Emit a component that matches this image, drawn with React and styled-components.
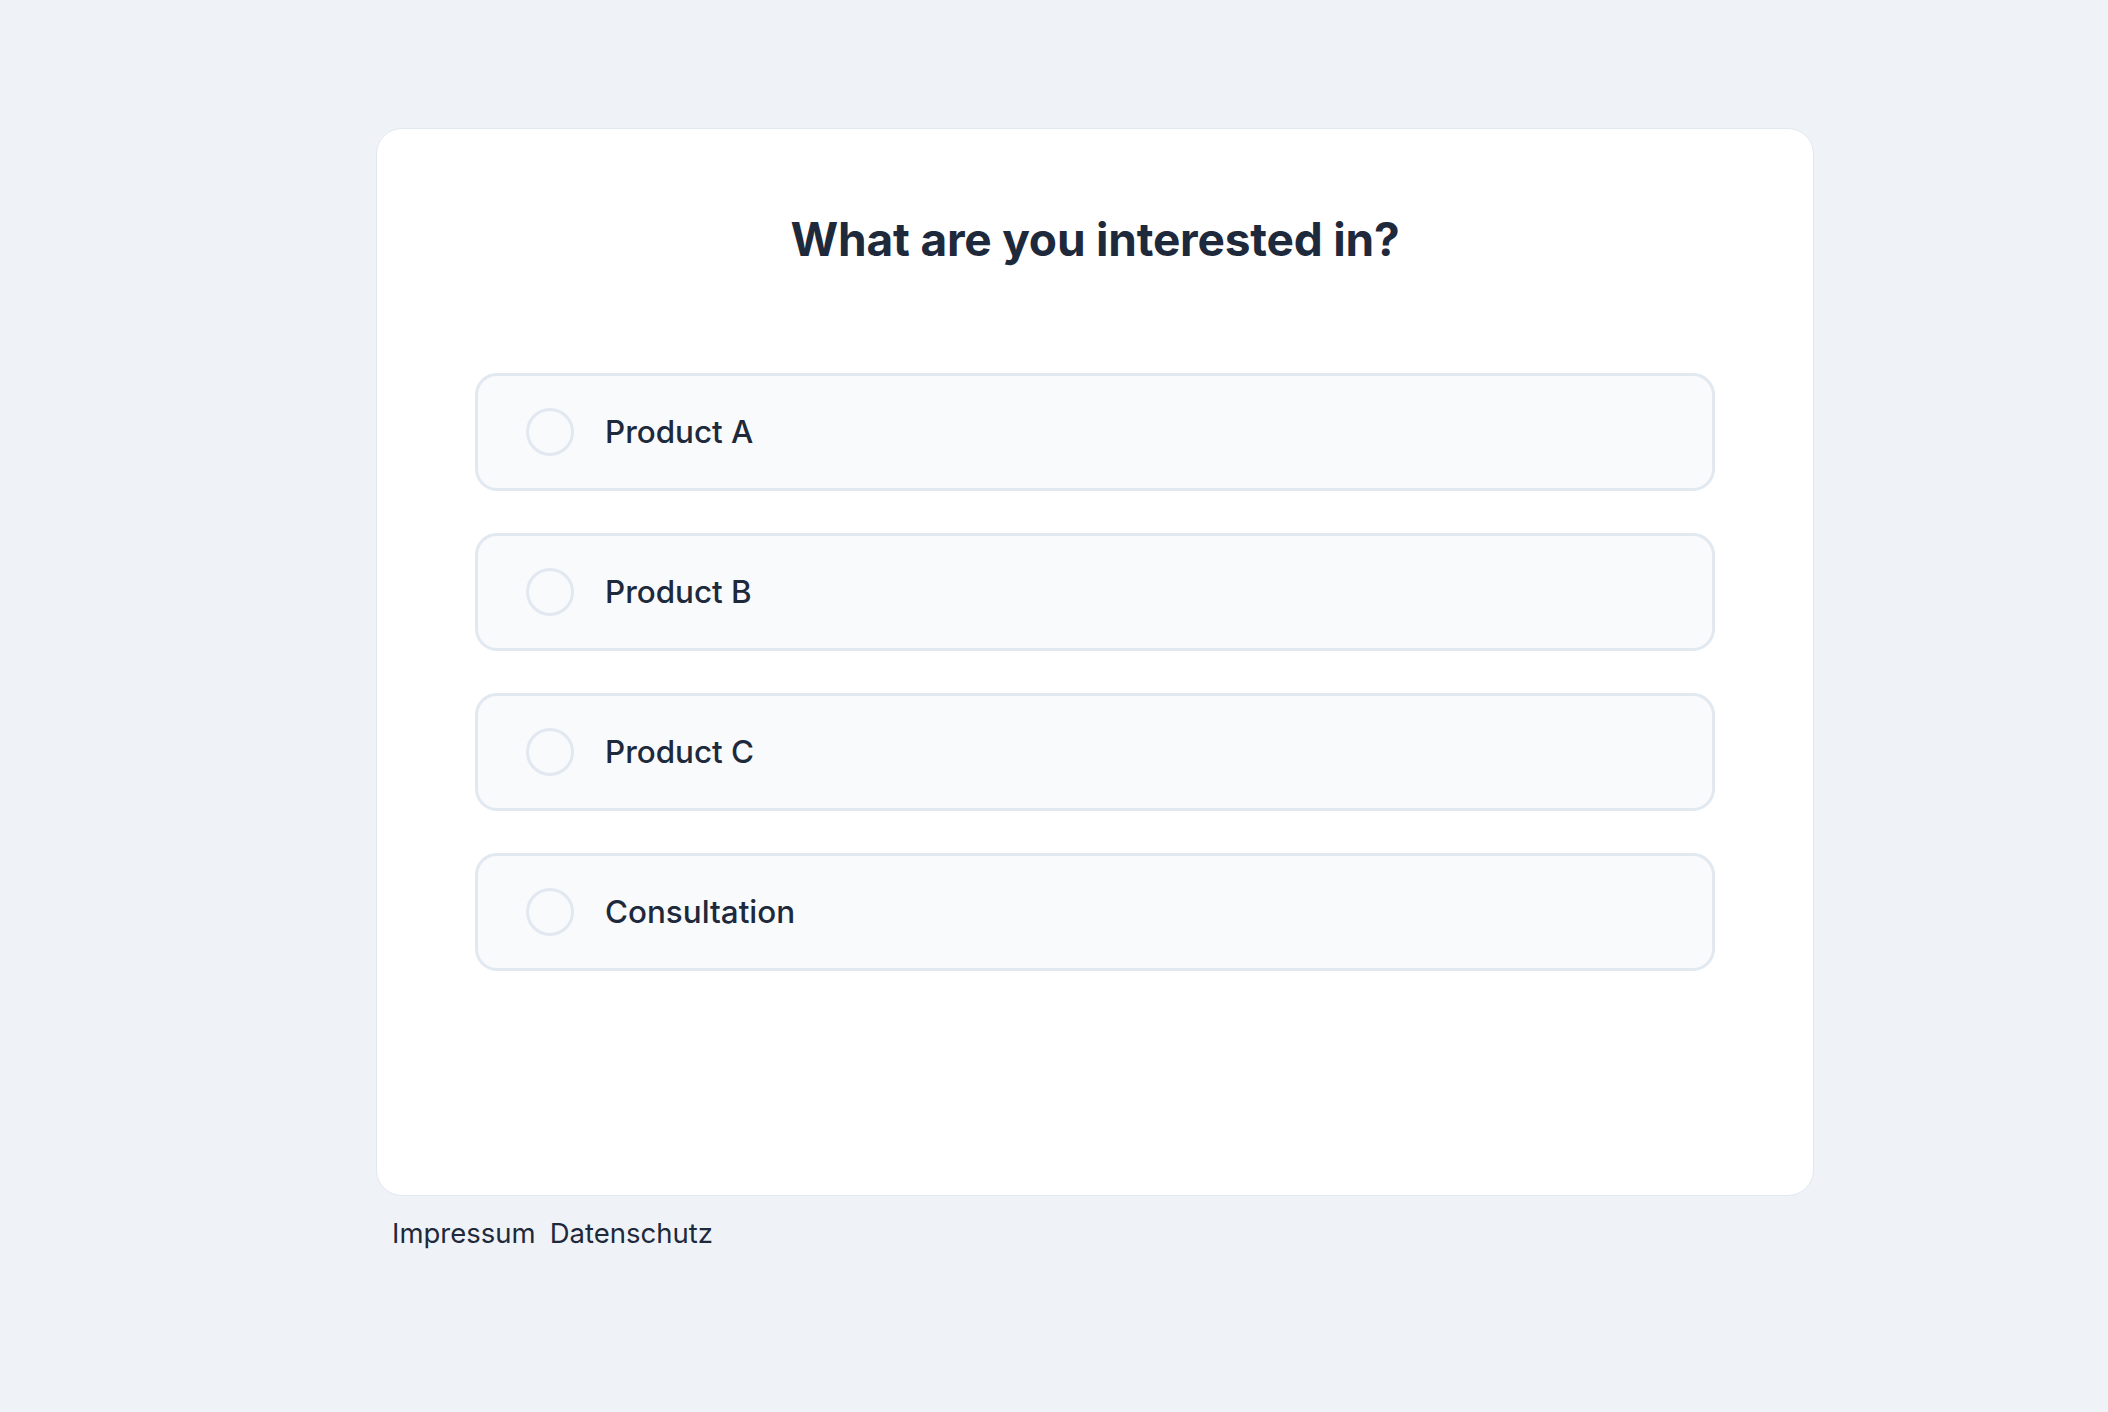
import React from 'react';
import styled, { createGlobalStyle } from 'styled-components';

const GlobalStyle = createGlobalStyle`
  html, body {
    margin: 0;
    padding: 0;
    background: #eff3f8;
  }
  body {
    font-family: 'Inter', 'Noto Sans', sans-serif;
    color: #1e293b;
  }
`;

const Page = styled.div`
  min-height: 100vh;
  box-sizing: border-box;
  padding: 128px 294px 0 376px;
`;

const Card = styled.div`
  box-sizing: border-box;
  width: 1438px;
  min-height: 1068px;
  background: #ffffff;
  border: 1px solid #e2e8f0;
  border-radius: 26px;
  padding: 83px 98px 120px;
  display: flex;
  flex-direction: column;
  align-items: center;
`;

const Title = styled.h1`
  margin: 0 0 106px;
  font-size: 46px;
  line-height: 55px;
  font-weight: 700;
  letter-spacing: -0.2px;
  color: #1e293b;
  text-align: center;
`;

const OptionList = styled.div`
  width: 100%;
  display: flex;
  flex-direction: column;
  gap: 42px;
`;

const Option = styled.label`
  box-sizing: border-box;
  height: 118px;
  display: flex;
  align-items: center;
  gap: 31px;
  padding: 0 48px;
  background: #f8fafc;
  border: 3px solid #e2e8f0;
  border-radius: 22px;
  cursor: pointer;
`;

const Radio = styled.span`
  box-sizing: border-box;
  width: 48px;
  height: 48px;
  flex: none;
  border-radius: 50%;
  border: 3px solid #e2e8f0;
  background: ${p => (p.$checked ? '#1e293b' : 'transparent')};
`;

const OptionText = styled.span`
  font-size: 31.4px;
  font-weight: 500;
  color: #1e293b;
`;

const Footer = styled.div`
  display: flex;
  gap: 14px;
  margin-top: 20px;
  padding-left: 16px;
`;

const FooterLink = styled.a`
  font-size: 27.5px;
  line-height: 34px;
  color: #1e293b;
  text-decoration: none;
`;

const options = ['Product A', 'Product B', 'Product C', 'Consultation'];

export default function App() {
  const [selected, setSelected] = React.useState(null);

  return (
    <Page>
      <GlobalStyle />
      <Card>
        <Title>What are you interested in?</Title>
        <OptionList>
          {options.map(opt => (
            <Option key={opt} onClick={() => setSelected(opt)}>
              <Radio $checked={selected === opt} />
              <OptionText>{opt}</OptionText>
            </Option>
          ))}
        </OptionList>
      </Card>
      <Footer>
        <FooterLink href="#">Impressum</FooterLink>
        <FooterLink href="#">Datenschutz</FooterLink>
      </Footer>
    </Page>
  );
}
